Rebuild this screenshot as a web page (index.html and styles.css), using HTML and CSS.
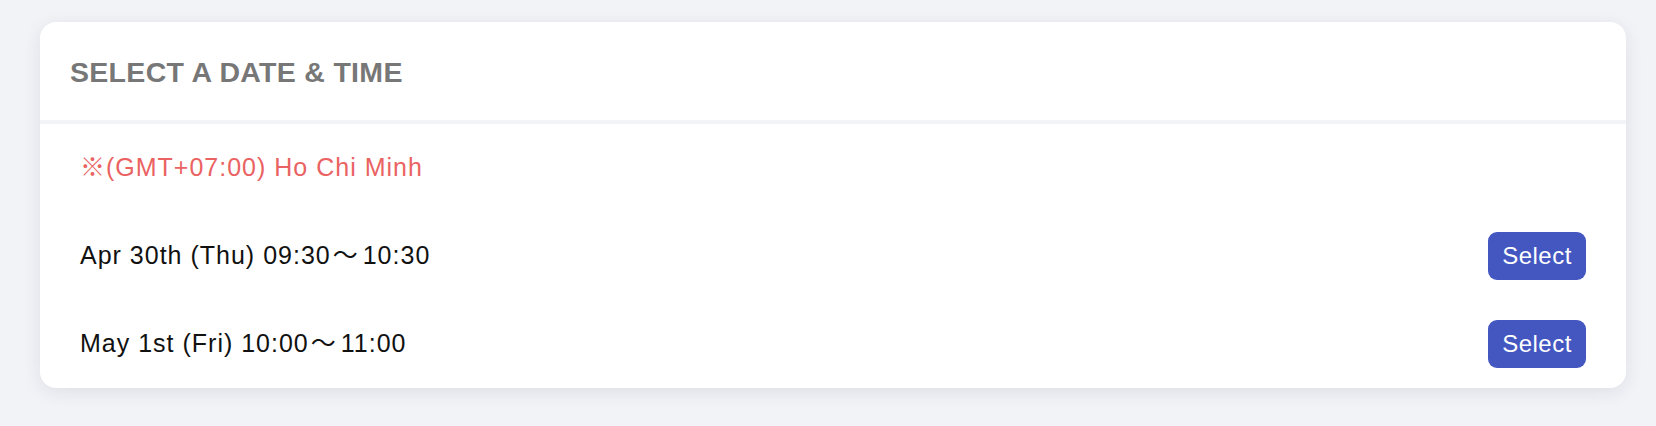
FILE: index.html
```html
<!DOCTYPE html>
<html>
<head>
<meta charset="utf-8">
<link rel="stylesheet" href="styles.css">
</head>
<body>
<div class="page">
  <div class="card">
    <div class="card-header">
      <h2 class="title">SELECT A DATE &amp; TIME</h2>
    </div>
    <div class="card-body">
      <div class="row tz"><span class="tz-text">※(GMT+07:00) Ho Chi Minh</span></div>
      <div class="row slot">
        <span class="slot-text">Apr 30th (Thu) 09:30<span class="wave">〜</span>10:30</span>
        <button class="btn">Select</button>
      </div>
      <div class="row slot">
        <span class="slot-text">May 1st (Fri) 10:00<span class="wave">〜</span>11:00</span>
        <button class="btn">Select</button>
      </div>
    </div>
  </div>
</div>
</body>
</html>
```

FILE: styles.css
```css
html, body {
  margin: 0;
  padding: 0;
  background: #f2f3f7;
  font-family: "Liberation Sans", "Noto Sans CJK JP", sans-serif;
}

.page {
  padding: 22px 30px 38px 40px;
}

.card {
  background: #ffffff;
  border-radius: 16px;
  box-shadow: 0 4px 18px rgba(30, 35, 60, 0.09);
  overflow: hidden;
}

.card-header {
  display: flex;
  align-items: center;
  padding: 0 30px;
  border-bottom: 4px solid #f3f4f8;
  box-sizing: border-box;
  height: 102px;
}

.title {
  margin: 0;
  font-size: 28.5px;
  font-weight: 700;
  color: #777777;
  letter-spacing: 0.3px;
  padding-top: 2px;
}

.row {
  height: 88px;
  display: flex;
  align-items: center;
  justify-content: space-between;
  padding: 0 40px;
  font-size: 25px;
  letter-spacing: 1px;
  color: #111111;
}

.tz {
  color: #ea6262;
}

.tz-text {
  margin-bottom: 6px;
}

.slot-text {
  margin-bottom: 6px;
}

.wave {
  letter-spacing: 0;
  margin: 0 5px 0 2px;
}

.btn {
  width: 98px;
  height: 48px;
  border: none;
  border-radius: 9px;
  background: #4457c1;
  color: #ffffff;
  font-family: "Liberation Sans", sans-serif;
  font-size: 24px;
  letter-spacing: 0.5px;
  padding: 0;
  cursor: pointer;
}
```
